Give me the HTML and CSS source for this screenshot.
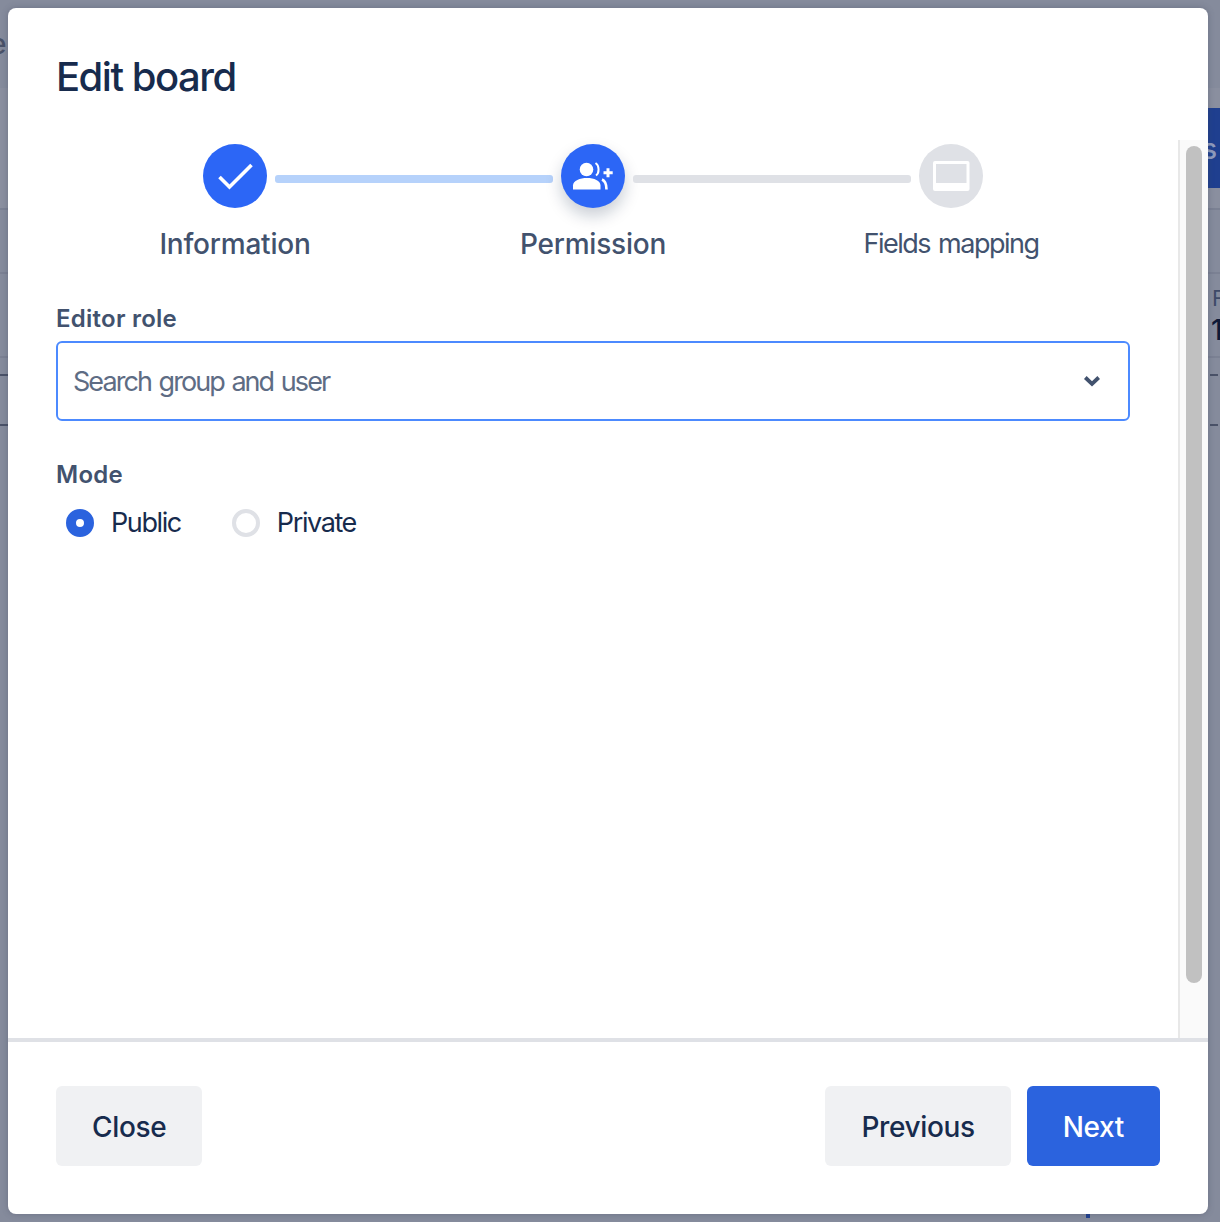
FILE: index.html
```html
<!DOCTYPE html>
<html lang="en">
<head>
<meta charset="utf-8">
<title>Edit board</title>
<link rel="stylesheet" href="styles.css">
</head>
<body>
<div class="backdrop">
  <span class="bg-letter bg-e">e</span>
  <span class="bg-band"></span>
  <span class="bg-line bg-l1"></span>
  <span class="bg-line bg-l2"></span>
  <span class="bg-line bg-l3"></span>
  <span class="bg-dash bg-d1"></span>
  <span class="bg-dash bg-d2"></span>
  <span class="bg-dash bg-d3"></span>
  <span class="bg-dash bg-d4"></span>
  <span class="bg-btn"><span class="bg-btn-s">s</span></span>
  <span class="bg-letter bg-f">F</span>
  <span class="bg-letter bg-one">1</span>
  <span class="bg-tick"></span>
</div>
<main class="modal">
  <h1 class="title">Edit board</h1>
  <div class="body">
    <div class="content">
      <div class="track">
        <span class="circle active">
          <svg width="64" height="64" viewBox="0 0 64 64"><path d="M16.500 33 L26.500 43 L48.500 21" fill="none" stroke="#fff" stroke-width="3.600"/></svg>
        </span>
        <span class="bar done"></span>
        <span class="circle active raised">
          <svg width="64" height="64" viewBox="0 0 64 64">
            <circle cx="25.500" cy="25.500" r="6.800" fill="#fff"/>
            <path d="M12 45.500 V41.500 C12 36.500 19 34 26 34 C33 34 39.500 36.500 39.500 41.500 V45.500 Z" fill="#fff"/>
            <path d="M34.500 19 C38.500 21.500 38.500 29 35 31.500" fill="none" stroke="#fff" stroke-width="2"/>
            <path d="M41 35.500 C44.500 37 45.500 40 45.500 45.500" fill="none" stroke="#fff" stroke-width="2.600"/>
            <path d="M42.500 28.800 H51.700 M47 24.300 V33.300" stroke="#fff" stroke-width="3" fill="none"/>
          </svg>
        </span>
        <span class="bar"></span>
        <span class="circle idle">
          <svg width="64" height="64" viewBox="0 0 64 64"><rect x="14" y="17" width="36.500" height="30" rx="2" fill="#fff"/><rect x="17" y="20" width="30.500" height="19" fill="#dfe1e6"/></svg>
        </span>
      </div>
      <div class="labels">
        <span class="step-label strong">Information</span>
        <span class="step-label strong">Permission</span>
        <span class="step-label">Fields mapping</span>
      </div>
      <label class="field-label first">Editor role</label>
      <div class="select">
        <span class="placeholder">Search group and user</span>
        <svg class="chevron" width="20" height="14" viewBox="0 0 20 14"><path d="M3.300 3.500 L10 9.800 L16.700 3.500" fill="none" stroke="#42526e" stroke-width="3.800"/></svg>
      </div>
      <label class="field-label second">Mode</label>
      <div class="radios">
        <span class="radio"><span class="dot on"></span>Public</span>
        <span class="radio"><span class="dot"></span>Private</span>
      </div>
    </div>
    <div class="scrollbar"><span class="thumb"></span></div>
  </div>
  <footer class="footer">
    <button class="btn">Close</button>
    <span class="spacer"></span>
    <button class="btn">Previous</button>
    <button class="btn primary">Next</button>
  </footer>
</main>
</body>
</html>
```
FILE: styles.css
```css
* { box-sizing: border-box; }
html, body { margin: 0; height: 100%; }
body {
  width: 1220px;
  height: 1222px;
  overflow: hidden;
  position: relative;
  background: #858b9c;
  font-family: Inter, "Liberation Sans", sans-serif;
  padding: 8px 12px 8px 8px;
}
.backdrop { position: absolute; inset: 0; overflow: hidden; }
.bg-band { position: absolute; left: 0; top: 88px; width: 1220px; height: 120px; background: #8a8f9f; }
.bg-line { position: absolute; left: 0; width: 1220px; height: 2px; background: #7b8193; }
.bg-l1 { top: 208px; }
.bg-l2 { top: 272px; }
.bg-l3 { top: 356px; }
.bg-dash { position: absolute; height: 2px; width: 8px; background: #4a5268; }
.bg-d1 { left: 0; top: 374px; }
.bg-d2 { left: 0; top: 424px; }
.bg-d3 { left: 1210px; top: 374px; }
.bg-d4 { left: 1210px; top: 424px; }
.bg-btn { position: absolute; left: 1208px; top: 108px; width: 12px; height: 80px; background: #1f3f8f; overflow: hidden; }
.bg-btn-s { position: absolute; left: -6px; top: 24px; color: #8f9bbd; font-size: 28px; font-weight: 500; line-height: 34px; }
.bg-letter { position: absolute; font-weight: 500; line-height: 1; }
.bg-e { left: -10px; top: 30px; font-size: 28px; color: #4a5268; }
.bg-f { left: 1212px; top: 287px; font-size: 22px; font-weight: 400; color: #3e4a68; }
.bg-one { left: 1211px; top: 316px; font-size: 28px; color: #0f1a38; }
.bg-tick { position: absolute; left: 1086px; top: 1214px; width: 4px; height: 4px; background: #1f3f8f; }

.modal {
  position: relative;
  width: 1200px;
  height: 1206px;
  background: #fff;
  border-radius: 8px;
  display: flex;
  flex-direction: column;
  overflow: hidden;
  box-shadow: 0 0 6px rgba(60, 66, 90, .35);
}
.title {
  margin: 0;
  height: 132px;
  padding: 44px 48px 0;
  font-size: 40px;
  line-height: 50px;
  font-weight: 500;
  letter-spacing: -1.5px;
  color: #172b4d;
}
.body { flex: 1; display: flex; min-height: 0; }
.content { flex: 1; padding: 4px 48px 0; }
.scrollbar {
  width: 30px;
  background: #fafafa;
  border-left: 2px solid #e8e8e8;
  padding: 6px 6px 55px;
  display: flex;
  justify-content: flex-end;
}
.thumb { width: 16px; background: #c1c1c1; border-radius: 8px; display: block; }
.track { display: flex; align-items: center; gap: 8px; padding: 0 147px; height: 64px; }
.circle { width: 64px; height: 64px; border-radius: 50%; flex: none; display: block; }
.circle svg { display: block; }
.active { background: #2c66f6; }
.raised { box-shadow: 0 8px 16px rgba(9, 30, 66, .22); }
.idle { background: #dfe1e6; }
.bar { flex: 1; height: 8px; margin-top: 6px; border-radius: 3px; background: #dfe1e6; }
.done { background: #b6d2fb; }
.labels { display: grid; grid-template-columns: repeat(3, 1fr); margin-top: 16px; }
.step-label {
  text-align: center;
  font-size: 27px;
  line-height: 40px;
  letter-spacing: -1.5px;
  word-spacing: 2px;
  color: #42526e;
}
.strong { font-size: 28px; font-weight: 500; letter-spacing: -.22px; }
.field-label {
  display: block;
  font-size: 24px;
  line-height: 32px;
  font-weight: 600;
  letter-spacing: .25px;
  color: #42526e;
}
.first { margin-top: 39px; }
.second { margin-top: 38px; }
.select {
  margin-top: 6px;
  height: 80px;
  border: 2px solid #4c8aff;
  border-radius: 6px;
  display: flex;
  align-items: center;
  justify-content: space-between;
  padding: 0 26px 0 15px;
}
.placeholder { font-size: 27px; letter-spacing: -1.95px; word-spacing: 2px; color: #5e6c84; }
.chevron { display: block; }
.radios { display: flex; gap: 51px; margin-top: 12px; padding-left: 10px; }
.radio {
  display: flex;
  align-items: center;
  gap: 18px;
  font-size: 27px;
  line-height: 40px;
  letter-spacing: -1.4px;
  color: #172b4d;
}
.dot { width: 28px; height: 28px; border-radius: 50%; border: 4px solid #dfe1e6; background: #fff; display: block; margin-right: -1px; }
.on { border: 10px solid #2b63de; }
.footer {
  height: 176px;
  flex: none;
  border-top: 4px solid #dfe1e6;
  padding: 44px 48px 0;
  display: flex;
  align-items: flex-start;
  gap: 16px;
}
.spacer { flex: 1; }
.btn {
  height: 80px;
  padding: 1px 36px 0;
  border: 0;
  border-radius: 6px;
  background: #f0f1f3;
  color: #172b4d;
  font-family: inherit;
  font-size: 28px;
  font-weight: 500;
  letter-spacing: -.35px;
}
.primary { background: #2b63de; color: #fff; }
```
